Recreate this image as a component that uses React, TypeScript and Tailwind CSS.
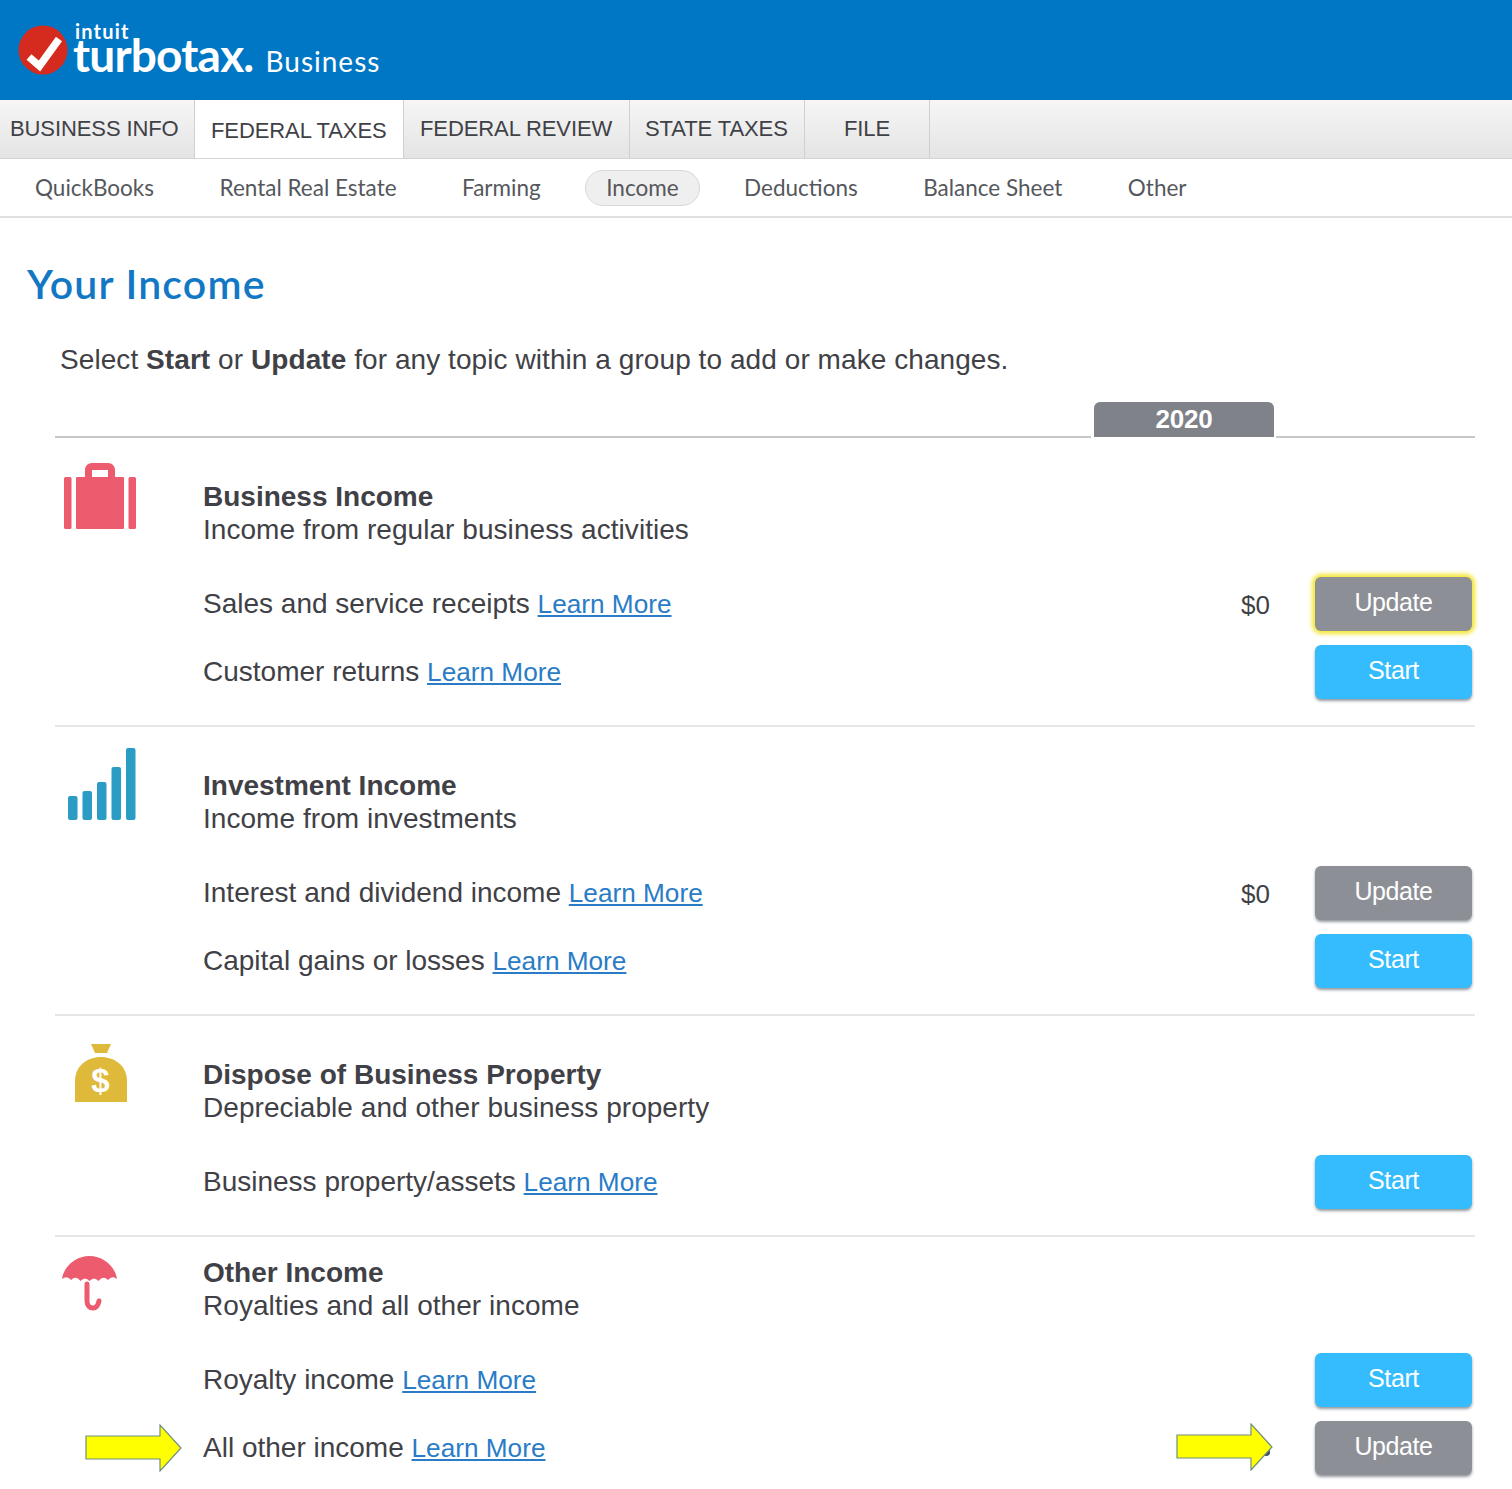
import { ReactNode } from 'react'

const tabs = [
  { label: 'BUSINESS INFO', cls: 'w-[195px] pl-[10px] pb-[2px]' },
  { label: 'FEDERAL TAXES', cls: 'w-[209px] pl-[16px]', active: true },
  { label: 'FEDERAL REVIEW', cls: 'w-[226px] pl-[16px] pb-[2px]' },
  { label: 'STATE TAXES', cls: 'w-[175px] pl-[15px] pb-[2px]' },
  { label: 'FILE', cls: 'w-[125px] justify-center pb-[2px]' },
]

const subNav = ['QuickBooks', 'Rental Real Estate', 'Farming', 'Income', 'Deductions', 'Balance Sheet', 'Other']

function Logo() {
  return (
    <div className="flex items-start pl-[18px] pt-[25px]">
      <svg width="50" height="50" viewBox="0 0 50 50" className="shrink-0">
        <circle cx="25" cy="25" r="24.5" fill="#d52b1e" />
        <path d="M11 32 L21.5 41 L41 14" fill="none" stroke="#fff" strokeWidth="7.5" />
      </svg>
      <div className="ml-[5px] text-white font-['Lato',sans-serif]">
        <div className="h-[13px] text-[20px] leading-[13px] font-bold tracking-[1.2px] ml-[2px]">intuit</div>
        <div className="flex items-baseline">
          <span className="text-[46px] leading-[33px] font-bold tracking-[-0.8px]">turbotax.</span>
          <span className="ml-[12px] text-[28px] leading-[33px] tracking-[1px]">Business</span>
        </div>
      </div>
    </div>
  )
}

function BriefcaseIcon() {
  return (
    <svg width="72" height="68" viewBox="0 0 72 68" fill="#ec5b6e">
      <rect x="0" y="15" width="7.5" height="52" rx="1.5" />
      <rect x="12" y="15" width="48" height="52" rx="1" />
      <rect x="64.5" y="15" width="7.5" height="52" rx="1.5" />
      <path d="M21 15 V8 C21 4 24 1 28 1 H44 C48 1 51 4 51 8 V15 H44 V8 H28 V15 Z" />
    </svg>
  )
}

function BarsIcon() {
  return (
    <svg width="68" height="72" viewBox="0 0 68 72" fill="#2b9cc3">
      <rect x="0" y="48" width="9.5" height="24" rx="2" />
      <rect x="14.5" y="43" width="9.5" height="29" rx="2" />
      <rect x="29" y="34" width="9.5" height="38" rx="2" />
      <rect x="43.5" y="19" width="9.5" height="53" rx="2" />
      <rect x="58" y="0" width="9.5" height="72" rx="2" />
    </svg>
  )
}

function MoneyBagIcon() {
  return (
    <svg width="52" height="59" viewBox="0 0 52 59" fill="#dfb93a">
      <path d="M16 0 H36 L32 9 H20 Z" />
      <path d="M0 58 V37 C0 22 12 13 26 13 C40 13 52 22 52 37 V58 Z" />
      <text x="25.5" y="48" textAnchor="middle" fill="#fff" fontSize="33" fontWeight="700" fontFamily="'Liberation Sans', sans-serif">$</text>
    </svg>
  )
}

function UmbrellaIcon() {
  return (
    <svg width="55" height="56" viewBox="0 0 55 56" fill="#ec5b6e">
      <path d="M0 23 C2 10 14 0 27.5 0 C41 0 53 10 55 23 Q50 19 46 24 Q41 19 36.5 25 Q32 20 27.5 25 Q23 20 18.500 25 Q14 19 9 24 Q5 19 0 23 Z" />
      <path d="M25 28 V45 C25 50 28 52 31 52 C34 52 36 50 37 45" fill="none" stroke="#ec5b6e" strokeWidth="5" strokeLinecap="round" />
    </svg>
  )
}

function YellowArrow({ dot }: { dot?: boolean }) {
  return (
    <svg width="97" height="48" viewBox="0 0 97 48">
      {dot && <circle cx="90" cy="29" r="4" fill="#3b4a66" />}
      <path d="M1 12 H75 V1 L96 24 L75 47 V35 H1 Z" fill="#ffff00" stroke="#6f8f7f" strokeWidth="1.2" />
    </svg>
  )
}

function ActionButton({ kind, glow }: { kind: 'Start' | 'Update'; glow?: boolean }) {
  const color = kind === 'Start' ? 'bg-[#34bcff]' : 'bg-[#8d8f96]'
  return (
    <button
      className={`w-[157px] h-[54px] rounded-[6px] text-white text-[25px] pb-[2px] tracking-[-0.4px] ${color} ${
        glow
          ? 'shadow-[0_0_4px_3px_#f5e633]'
          : 'shadow-[0_2px_3px_rgba(60,70,80,0.55)]'
      }`}
    >
      {kind}
    </button>
  )
}

function Row({ label, amount, kind, glow }: { label: string; amount?: string; kind: 'Start' | 'Update'; glow?: boolean }) {
  return (
    <div className="flex items-center h-[54px] pr-[3px]">
      <div className="flex-1 text-[28px] leading-none">
        {label}{' '}
        <a href="#" className="text-[#2a7cc7] underline text-[26.2px]">Learn More</a>
      </div>
      {amount && <div className="text-[26px] mr-[45px] pt-[2px]">{amount}</div>}
      <ActionButton kind={kind} glow={glow} />
    </div>
  )
}

function Section({
  icon,
  iconCls,
  title,
  subtitle,
  children,
  topCls = 'pt-[42px]',
  last,
}: {
  icon: ReactNode
  iconCls: string
  title: string
  subtitle: string
  children: ReactNode
  topCls?: string
  last?: boolean
}) {
  return (
    <section className={`flex ${last ? 'pb-[14px]' : 'pb-[26px] border-b-2 border-[#e6e6e6]'}`}>
      <div className={`w-[148px] shrink-0 ${iconCls}`}>{icon}</div>
      <div className={`flex-1 ${topCls}`}>
        <h2 className="text-[28px] leading-[33px] font-bold">{title}</h2>
        <p className="text-[28px] leading-[33px] tracking-[0.05px]">{subtitle}</p>
        <div className="mt-[31px] flex flex-col gap-[14px]">{children}</div>
      </div>
    </section>
  )
}

export default function App() {
  return (
    <div className="relative w-[1512px] min-h-[1489px] bg-white text-[#3f4146] font-['Liberation_Sans',Arial,sans-serif]">
      <header className="h-[100px] bg-[#0077c5]">
        <Logo />
      </header>

      <nav className="flex h-[59px] bg-gradient-to-b from-[#f6f6f6] to-[#e4e4e4] border-b border-[#d4d4d4]">
        {tabs.map((t) => (
          <div
            key={t.label}
            className={`flex items-center h-full text-[22px] tracking-[-0.1px] border-r border-[#d0d0d0] ${t.cls} ${
              t.active ? 'bg-white h-[60px] pt-[2px]' : ''
            }`}
          >
            {t.label}
          </div>
        ))}
      </nav>

      <div className="flex items-center gap-[23.5px] h-[59px] pl-[14px] border-b-2 border-[#e0e0e0] text-[22.5px] text-[#55575c] font-['Lato',sans-serif]">
        {subNav.map((s) => (
          <div
            key={s}
            className={`px-[20px] h-[36px] leading-[33px] rounded-full border ${
              s === 'Income' ? 'bg-[#efefef] border-[#d8d8d8]' : 'border-transparent'
            }`}
          >
            {s}
          </div>
        ))}
      </div>

      <h1 className="pl-[27px] pt-[41px] text-[41px] leading-[50px] font-semibold text-[#1277c4] font-['Lato',sans-serif] tracking-[1.2px]">
        Your Income
      </h1>

      <p className="pl-[60px] pt-[34px] text-[28px] leading-[34px] tracking-[0.07px]">
        Select <b>Start</b> or <b>Update</b> for any topic within a group to add or make changes.
      </p>

      <div className="mx-[55px] w-[1420px]">
        <div className="flex items-end mt-[24px] h-[37px]">
          <div className="flex-1 h-[2px] bg-[#c8c8c8]" />
          <div className="w-[180px] h-[35px] ml-[3px] mr-[2px] mb-[1px] rounded-t-[6px] bg-[#7f8289] text-white font-bold text-[26px] leading-[34px] text-center tracking-[-0.2px]">
            2020
          </div>
          <div className="w-[199px] h-[2px] bg-[#c8c8c8]" />
        </div>

        <Section icon={<BriefcaseIcon />} iconCls="pl-[9px] pt-[24px]" title="Business Income" subtitle="Income from regular business activities">
          <Row label="Sales and service receipts" amount="$0" kind="Update" glow />
          <Row label="Customer returns" kind="Start" />
        </Section>

        <Section icon={<BarsIcon />} iconCls="pl-[13px] pt-[21px]" title="Investment Income" subtitle="Income from investments">
          <Row label="Interest and dividend income" amount="$0" kind="Update" />
          <Row label="Capital gains or losses" kind="Start" />
        </Section>

        <Section icon={<MoneyBagIcon />} iconCls="pl-[20px] pt-[28px]" title="Dispose of Business Property" subtitle="Depreciable and other business property">
          <Row label="Business property/assets" kind="Start" />
        </Section>

        <Section icon={<UmbrellaIcon />} iconCls="pl-[7px] pt-[19px]" topCls="pt-[19px]" title="Other Income" subtitle="Royalties and all other income" last>
          <Row label="Royalty income" kind="Start" />
          <Row label="All other income" kind="Update" />
        </Section>
      </div>

      {/* annotation arrows pasted on top of the screenshot */}
      <div className="absolute left-[85px] top-[1424px]">
        <YellowArrow />
      </div>
      <div className="absolute left-[1176px] top-[1423px]">
        <YellowArrow dot />
      </div>
    </div>
  )
}
